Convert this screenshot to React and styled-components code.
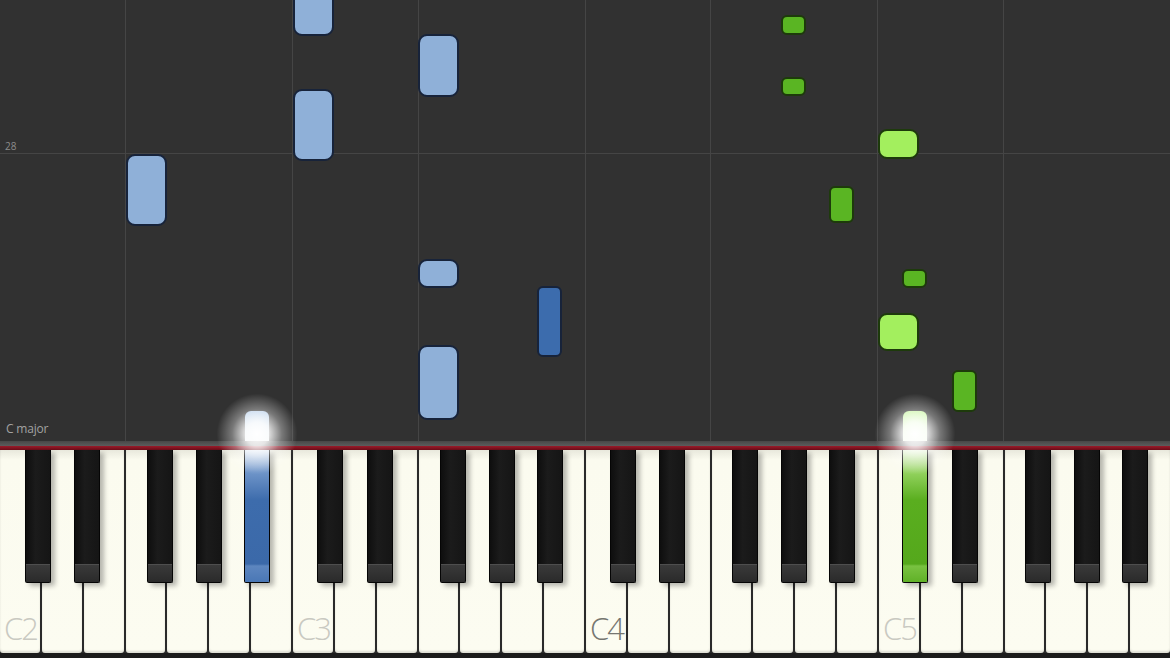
import styled, { createGlobalStyle } from 'styled-components'

const W = 1170 / 28
const OCT = W * 7
const BLACK_OFFSETS = [24.5, 74, 147, 196, 244]
const BLACK_W = 26
const ROLL_H = 441

const GlobalStyle = createGlobalStyle`
    html, body {
        margin: 0;
        padding: 0;
        background: #1b1b1b;
        overflow: hidden;
    }
`

const Screen = styled.div`
    position: relative;
    width: 1170px;
    height: 658px;
    display: flex;
    flex-direction: column;
    overflow: hidden;
    font-family: "Open Sans", "Noto Sans", sans-serif;
`

// lanes, bar line and the notes share one grid cell
const Roll = styled.div`
    position: relative;
    height: ${ROLL_H}px;
    flex: none;
    display: grid;
    background: #313131;
    overflow: hidden;
    & > * {
        grid-area: 1 / 1;
    }
`

const Lanes = styled.div`
    display: flex;
    height: 100%;
`

const Lane = styled.div`
    width: ${({span}) => span * W}px;
    flex: none;
    border-left: ${({first}) => first ? 'none' : '1px solid #454545'};
    box-sizing: border-box;
`

const Bar = styled.div`
    display: flex;
    align-items: flex-end;
    height: 154px;
    padding-left: 5px;
    box-sizing: border-box;
    border-bottom: 1px solid #454545;
    font-size: 10px;
    color: #8c8c8c;
`

const Caption = styled.div`
    align-self: end;
    padding: 0 0 4px 6px;
    font-size: 12px;
    color: #a2a2a2;
    letter-spacing: -0.2px;
    z-index: 1;
`

const palette = {
    L: { white: '#8fb0d8', black: '#3c6cad', edge: '#17233a', lit: '#b4cdea' },
    R: { white: '#a3ef5e', black: '#5ab523', edge: '#1d3a0b', lit: '#c4f59a' },
}

const Note = styled.div`
    position: absolute;
    box-sizing: border-box;
    background: ${({hand, black}) => palette[hand][black ? 'black' : 'white']};
    border: 2px solid ${({hand}) => palette[hand].edge};
    border-radius: ${({black}) => black ? 6 : 9}px;
`

const Stub = styled.div`
    position: absolute;
    box-sizing: border-box;
    top: 411px;
    height: 40px;
    border-radius: 6px;
    background: linear-gradient(${({hand}) => palette[hand].lit}, #f4f8ee);
`

const Rail = styled.div`
    height: 5px;
    flex: none;
    background: linear-gradient(#474747, #5c5c5c);
`

const RedLine = styled.div`
    height: 4px;
    flex: none;
    background: linear-gradient(#9a1a2a, #6a0c18);
`

const Keyboard = styled.div`
    position: relative;
    height: 203px;
    flex: none;
    display: flex;
    gap: 2px;
    background: #2a2a2a;
`

const WhiteKey = styled.div`
    flex: 1;
    display: flex;
    flex-direction: column;
    justify-content: flex-end;
    padding: 0 0 9px 4px;
    background: linear-gradient(#e8e8dc 0, #fbfbef 10px, #fcfcf1 100%);
    border-radius: 0 0 3px 3px;
    box-shadow: inset 0 -2px 2px rgba(0,0,0,0.12);
`

const KeyLabel = styled.span`
    font-size: 31px;
    line-height: 1;
    letter-spacing: -2px;
    font-weight: 300;
    white-space: nowrap;
    color: ${({dark}) => dark ? '#767670' : '#c9c9c1'};
`

const BlackKey = styled.div`
    position: absolute;
    top: 0;
    width: ${BLACK_W}px;
    height: 133px;
    box-sizing: border-box;
    border: 1.5px solid #050505;
    border-top: none;
    border-radius: 0 0 2px 2px;
    background: ${({pressed}) => pressed === 'L'
        ? 'linear-gradient(#dfe8f4 0, #6f95c9 22px, #3d6cac 50px, #3b69a9 114px, #5d86bf 116px, #4b78b6 131px)'
        : pressed === 'R'
        ? 'linear-gradient(#e6f5d6 0, #8fd05a 24px, #5aae1f 50px, #55a81c 114px, #79c241 116px, #62b229 131px)'
        : 'linear-gradient(90deg, #0e0e0e, #1b1b1b 40%, #151515), linear-gradient(#101010, #1d1d1d)'};
    box-shadow: 4px 3px 5px rgba(0,0,0,0.28);
    overflow: hidden;
    display: flex;
    flex-direction: column;
    justify-content: flex-end;
`

const Lip = styled.div`
    height: 17px;
    border-top: 1px solid #4e4e4e;
    background: linear-gradient(#3a3a3a, #2a2a2a);
`

const Base = styled.div`
    flex: 1;
    background: #1b1b1b;
`

const Glow = styled.div`
    position: absolute;
    top: 392px;
    width: 84px;
    height: 84px;
    border-radius: 50%;
    background: radial-gradient(circle, rgba(255,255,255,1) 0, rgba(255,255,255,0.85) 20%, rgba(255,255,255,0.35) 42%, rgba(255,255,255,0) 68%);
    pointer-events: none;
`

const whiteX = i => i * W
const blackX = (o, k) => o * OCT + BLACK_OFFSETS[k]

const notes = [
    { hand: 'L', w: 3, y: 154, h: 72 },
    { hand: 'L', w: 7, y: -12, h: 48 },
    { hand: 'L', w: 7, y: 89, h: 72 },
    { hand: 'L', w: 10, y: 34, h: 63 },
    { hand: 'L', w: 10, y: 259, h: 29 },
    { hand: 'L', w: 10, y: 345, h: 75 },
    { hand: 'L', b: [1, 4], y: 286, h: 71 },
    { hand: 'R', b: [2, 3], y: 15, h: 20 },
    { hand: 'R', b: [2, 3], y: 77, h: 19 },
    { hand: 'R', w: 21, y: 129, h: 30 },
    { hand: 'R', b: [2, 4], y: 186, h: 37 },
    { hand: 'R', b: [3, 0], y: 269, h: 19 },
    { hand: 'R', w: 21, y: 313, h: 38 },
    { hand: 'R', b: [3, 1], y: 370, h: 42 },
]

const held = [
    { hand: 'L', o: 0, k: 4 },
    { hand: 'R', o: 3, k: 0 },
]

const pressed = Object.fromEntries(held.map(h => [`${h.o}-${h.k}`, h.hand]))

const lanes = [0, 1, 2, 3, 4, 5, 6, 7].map(i => i % 2 === 0 ? 3 : 4)

const whiteKeys = Array.from({length: 28}, (_, i) => i)
const blackKeys = [0, 1, 2, 3].flatMap(o => [0, 1, 2, 3, 4].map(k => ({o, k})))

const App = () => (
    <Screen>
        <GlobalStyle />
        <Roll>
            <Lanes>
                {lanes.map((s, i) => <Lane key={i} span={s} first={i === 0} />)}
            </Lanes>
            <Bar>28</Bar>
            {notes.map((n, i) => {
                const black = !!n.b
                const left = black ? blackX(...n.b) : whiteX(n.w) + 0.5
                const width = black ? BLACK_W - 1 : W - 1
                return (
                    <Note
                        key={i}
                        hand={n.hand}
                        black={black}
                        style={{ left, top: n.y, width, height: n.h }}
                    />
                )
            })}
            {held.map(h => (
                <Stub
                    key={h.hand}
                    hand={h.hand}
                    style={{ left: blackX(h.o, h.k) + 1, width: BLACK_W - 2 }}
                />
            ))}
            <Caption>C major</Caption>
        </Roll>
        <Rail />
        <RedLine />
        <Keyboard>
            {whiteKeys.map(i => (
                <WhiteKey key={i}>
                    {i % 7 === 0 && <KeyLabel dark={i === 14}>C{2 + i / 7}</KeyLabel>}
                </WhiteKey>
            ))}
            {blackKeys.map(({o, k}) => (
                <BlackKey
                    key={`${o}-${k}`}
                    pressed={pressed[`${o}-${k}`]}
                    style={{ left: blackX(o, k) }}
                >
                    {!pressed[`${o}-${k}`] && <Lip />}
                </BlackKey>
            ))}
        </Keyboard>
        <Base />
        {held.map(h => (
            <Glow key={h.hand} style={{ left: blackX(h.o, h.k) + BLACK_W / 2 - 42 }} />
        ))}
    </Screen>
)

export default App
